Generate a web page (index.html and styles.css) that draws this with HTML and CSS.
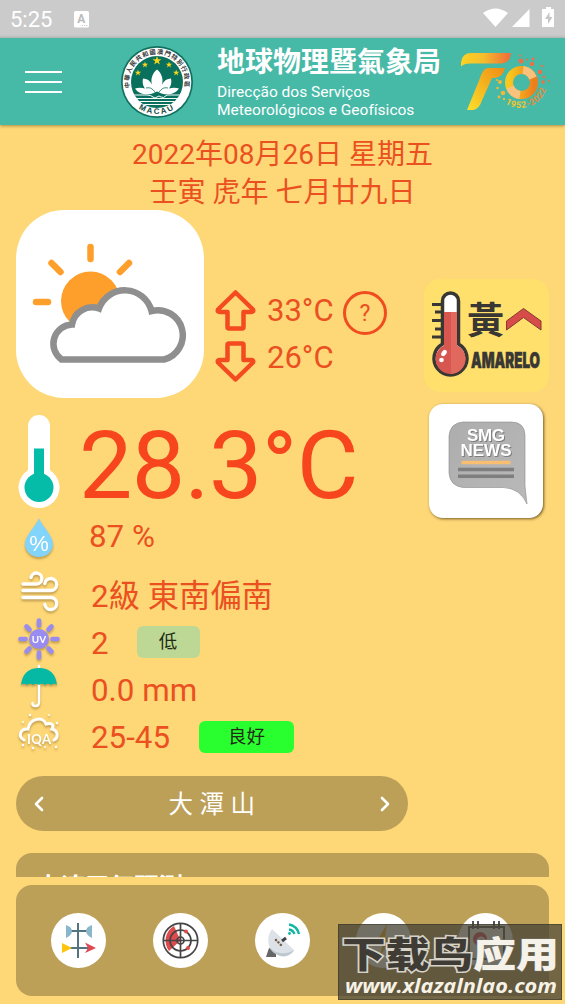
FILE: index.html
```html
<!DOCTYPE html>
<html lang="zh-Hant">
<head>
    <meta charset="UTF-8">
    <meta name="viewport" content="width=device-width, initial-scale=1.0">
    <title>地球物理暨氣象局</title>
    <link rel="stylesheet" href="styles.css">
</head>
<body>
    <div class="status-bar">
        <span class="time">5:25</span>
        <svg class="status-app" width="15" height="17" viewBox="0 0 15 17">
            <rect width="15" height="16.5" rx="1.5" fill="#fff"/>
            <text x="7.3" y="12" text-anchor="middle" font-family="Roboto" font-weight="700" font-size="12" fill="#bbb">A</text>
            <path d="M7.500 14.500h6" stroke="#ccc" stroke-dasharray="1.300 1"/>
        </svg>
        <svg class="status-icons" width="72" height="22" viewBox="0 0 72 22">
            <path d="M0 6Q12.500-3 25 6L12.500 20Z" fill="#fff"/>
            <path d="M29 20L46.500 2v18Z" fill="#fff"/>
            <path d="M60 2h3V0h5v2h3v18H59V2Z" fill="#fff"/>
            <path d="M66.500 5l-4.500 7h3v5l4.500-7h-3Z" fill="#c6c6c6"/>
        </svg>
    </div>

    <header class="app-bar">
        <div class="menu-button"><span></span><span></span><span></span></div>
        <svg class="emblem" width="72" height="72" viewBox="0 0 72 72">
            <defs>
                <path id="ringTop" d="M8.900 42A27.800 27.800 0 1 1 63.100 42"/>
                <path id="ringBottom" d="M7 50A32.300 32.300 0 0 0 65 50"/>
                <clipPath id="innerDisc"><circle cx="36" cy="36" r="26"/></clipPath>
            </defs>
            <circle cx="36" cy="36" r="36" fill="#12705f"/>
            <circle cx="36" cy="36" r="34.300" fill="#fff"/>
            <circle cx="36" cy="36" r="26" fill="#08705c"/>
            <text class="ring-text"><textPath href="#ringTop">中華人民共和國澳門特別行政區</textPath></text>
            <text class="ring-macau"><textPath href="#ringBottom" startOffset="50%" text-anchor="middle">MACAU</textPath></text>
            <g fill="#f6d51c">
                <path id="star" d="M36 10l1.100 3.200h3.400l-2.700 2 1 3.300-2.800-2-2.800 2 1-3.300-2.700-2h3.400Z"/>
                <use href="#star" transform="translate(-1.200 8.500) scale(.7)"/>
                <use href="#star" transform="translate(22.800 8.500) scale(.7)"/>
                <use href="#star" transform="translate(-8.200 16.500) scale(.7)"/>
                <use href="#star" transform="translate(30 16.500) scale(.7)"/>
            </g>
            <g fill="#fff">
                <path d="M36 23.500c5 4 6.500 10 5 15 2-4 5-6 9-6 1 5-.5 8-2 10 3-1 7-1 10 0-4 6-13 8-22 3-9 5-18 3-22-3 3-1 7-1 10 0-1.500-2-3-5-2-10 4 0 7 2 9 6-1.500-5 0-11 5-15Z"/>
            </g>
            <path d="M36 49C32 43 30 41 25 42M36 49c4-6 6-8 11-7" fill="none" stroke="#08705c" stroke-width=".8"/>
            <g clip-path="url(#innerDisc)" stroke="#fff" fill="none">
                <path d="M8 49h18q4 0 6 2t4 0 4 0 6-2h18" stroke-width="1"/>
                <path d="M8 52.500h56M8 55.500h56M8 58.500h56" stroke-width="1"/>
            </g>
        </svg>
        <div class="titles">
            <h1>地球物理暨氣象局</h1>
            <p>Direcção dos Serviços<br>Meteorológicos e Geofísicos</p>
        </div>
        <svg class="anniversary" width="90" height="58" viewBox="0 0 90 58">
            <defs>
                <linearGradient id="goldBar" x1="0" x2="1">
                    <stop offset="0" stop-color="#fad323"/><stop offset=".45" stop-color="#f5bd2c"/><stop offset="1" stop-color="#f06a3b"/>
                </linearGradient>
                <linearGradient id="goldStem" x1="1" y1="0" x2="0" y2="1">
                    <stop offset="0" stop-color="#ef8b16"/><stop offset="1" stop-color="#fae02a"/>
                </linearGradient>
                <linearGradient id="goldRing" x1="0" x2="1">
                    <stop offset="0" stop-color="#f9c91e"/><stop offset="1" stop-color="#ed7e1d"/>
                </linearGradient>
                <path id="yearArc" d="M44 50.500A27.500 27.500 0 0 0 86 33"/>
            </defs>
            <path d="M0 13.500V9.500Q1 0 10 0H50Q49 10.500 40 10.500H9Q3 10.500 0 13.500Z" fill="url(#goldBar)"/>
            <path d="M27 15H44L42 20Q40 24 34 25H31L19 52Q16 57 11 57H6L19 25Q22 15 27 15Z" fill="url(#goldStem)"/>
            <circle cx="60.500" cy="29.500" r="12.500" fill="none" stroke="url(#goldRing)" stroke-width="8"/>
            <path d="M62 17A12.500 12.500 0 0 1 72 25M59 42A12.500 12.500 0 0 1 49 34" fill="none" stroke="#f8c17c" stroke-width="8"/>
            <g fill="#ee7044">
                <circle cx="60" cy="8" r="2.500"/><circle cx="71" cy="11" r="2.200"/><circle cx="79" cy="19" r="2.200"/>
                <circle cx="72" cy="6" r="1.400"/><circle cx="66" cy="6.500" r="1"/><circle cx="81" cy="13" r="1.200"/>
                <circle cx="83" cy="24" r="1.300"/><circle cx="82" cy="29" r="1.700"/><circle cx="88" cy="28" r="1"/><circle cx="59" cy="2.500" r="1"/>
            </g>
            <g fill="#efb83a">
                <circle cx="39" cy="29" r="2"/><circle cx="36.500" cy="35" r="1.300"/><circle cx="42" cy="40" r="2.300"/><circle cx="38" cy="44" r="1.400"/><circle cx="43" cy="46" r="1.200"/><circle cx="36" cy="27" r="1"/>
            </g>
            <text class="years"><textPath href="#yearArc" textLength="50"><tspan fill="#f4c52b">1952</tspan><tspan fill="#eb8a35">-2022</tspan></textPath></text>
        </svg>
    </header>

    <main>
        <div class="date">
            <p>2022年08月26日 星期五</p>
            <p>壬寅 虎年 七月廿九日</p>
        </div>

        <div class="overview">
            <section class="readings">
                <div class="today">
                    <div class="weather-icon">
                        <svg width="188" height="188" viewBox="0 0 188 188">
                            <circle cx="74.500" cy="91" r="29.500" fill="#ff9f2b"/>
                            <path d="M74.500 37v12M35.500 53l9 9M113 53l-9 9M20 92h12" stroke="#ff9f2b" stroke-width="6.500" stroke-linecap="round"/>
                            <path d="M46.500 149.500A19.300 19.300 0 0 1 57 114.500A20.500 20.500 0 0 1 84 98.500A27.500 27.500 0 0 1 136.500 101A25 25 0 1 1 149 149.500Z" transform="translate(-1)" fill="#fff" stroke="#8f8f8f" stroke-width="6.500"/>
                        </svg>
                    </div>
                    <div class="range">
                        <div class="range-row">
                            <svg width="41" height="41" viewBox="0 0 41 41"><path d="M20.500 2.500L38 19.500Q39 22 36 22H28.500V37Q28.500 38.500 27 38.500H14Q12.500 38.500 12.500 37V22H5Q2 22 3 19.500Z"/></svg>
                            <span>33°C</span>
                            <div class="help">?</div>
                        </div>
                        <div class="range-row">
                            <svg class="down" width="41" height="41" viewBox="0 0 41 41"><path d="M20.500 2.500L38 19.500Q39 22 36 22H28.500V37Q28.500 38.500 27 38.500H14Q12.500 38.500 12.500 37V22H5Q2 22 3 19.500Z"/></svg>
                            <span>26°C</span>
                        </div>
                    </div>
                </div>

                <div class="reading current">
                    <svg width="46" height="98" viewBox="0 0 46 98">
                        <rect x="12" y="3" width="22" height="70" rx="11" fill="#fff"/>
                        <circle cx="23" cy="75.500" r="20.500" fill="#fff"/>
                        <circle cx="23" cy="75.500" r="14.500" fill="#05bca9"/>
                        <path d="M18 36.500h10v32H18Z" fill="#05bca9"/>
                    </svg>
                    <span>28.3°C</span>
                </div>
                <div class="reading humidity">
                    <svg width="46" height="46" viewBox="0 0 46 46">
                        <path d="M23 1C21 8 9 18 9 27a14 13 0 0 0 28 0C37 18 25 8 23 1Z" fill="#83d4fa"/>
                        <text x="23" y="33.500" text-anchor="middle" font-family="Liberation Sans" font-size="22" fill="#fff">%</text>
                    </svg>
                    <span>87 %</span>
                </div>
                <div class="reading wind">
                    <svg width="46" height="46" viewBox="0 0 46 46" fill="none" stroke="#fff" stroke-width="3.400" stroke-linecap="round">
                        <path d="M7 14H20A5.500 5.500 0 1 0 15 7.500M7 20.500H34.500A6 6 0 1 0 28.800 13.500M7 27.500H34.500A6 6 0 1 1 28.800 34.500"/>
                    </svg>
                    <span>2級 東南偏南</span>
                </div>
                <div class="reading">
                    <svg width="46" height="46" viewBox="0 0 46 46">
                        <circle cx="23" cy="22" r="10" fill="#988cf0"/>
                        <path d="M23 3.500v5M23 35.500v5M4.500 22h5M36.500 22h5M10.500 9.500l3 3M32.500 31.500l3 3M10.500 34.500l3-3M32.500 12.500l3-3" stroke="#988cf0" stroke-width="4.600" stroke-linecap="round"/>
                        <text x="23" y="25.500" text-anchor="middle" font-family="Lato" font-weight="700" font-size="10" fill="#fff">UV</text>
                    </svg>
                    <span>2</span>
                    <em class="level low">低</em>
                </div>
                <div class="reading">
                    <svg width="46" height="46" viewBox="0 0 46 46">
                        <path d="M23 2V38Q23 42 19.500 42T16.500 39" fill="none" stroke="#fff" stroke-width="2.500" stroke-linecap="round"/>
                        <path d="M5 21Q7 4 23 4T41 21q-3-2.500-6 0-3-2.500-6 0-3-2.500-6 0-3-2.500-6 0-3-2.500-6 0-3-2.500-6 0Z" fill="#05b9a5"/>
                    </svg>
                    <span>0.0 mm</span>
                </div>
                <div class="reading">
                    <svg width="46" height="46" viewBox="0 0 46 46">
                        <path d="M8 29C1 25 5 17 12 18C14 7 27 5 30 13C37 11 38 15 36 18C43 20 42 27 38 29" fill="none" stroke="#fff" stroke-width="3" stroke-linecap="round"/>
                        <text x="23" y="32.500" text-anchor="middle" font-family="Lato" font-weight="700" font-size="13" fill="#fff" textLength="24">IQA</text>
                        <g fill="#fff"><circle cx="14" cy="4" r="1.300"/><circle cx="7" cy="11" r="1"/><circle cx="33" cy="4" r="1"/><circle cx="41" cy="12" r="1.200"/><circle cx="7" cy="34" r="1.200"/><circle cx="17" cy="37" r="1.200"/><circle cx="29" cy="36" r="1"/><circle cx="40" cy="36" r="1.200"/></g>
                    </svg>
                    <span>25-45</span>
                    <em class="level good">良好</em>
                </div>
            </section>

            <aside class="cards">
                <div class="card warning">
                    <svg width="125" height="113" viewBox="0 0 125 113">
                        <path d="M18.500 65V22a8 8 0 0 1 16 0V65a16.500 16.500 0 1 1-16 0Z" fill="#fff" stroke="#393733" stroke-width="3.500"/>
                        <path d="M20 33H33V66.500a15 15 0 1 1-13 0Z" fill="#d85650"/>
                        <path d="M27 33h6v33.500a15 15 0 0 1-6 28.500Z" fill="#e0685c"/>
                        <path d="M8 25.500h9M11 33h6M8 41.500h9M11 50h6M8 58h9" stroke="#393733" stroke-width="3"/>
                        <ellipse cx="20" cy="74" rx="2.300" ry="3.500" transform="rotate(35 20 74)" fill="#fff"/><circle cx="17.500" cy="81" r="2.300" fill="#fff"/>
                        <text x="43" y="55" class="yellow-sign">黃</text>
                        <path d="M82.500 42L99.500 29.500 117 42V51L99.500 38.500 82.500 51Z" fill="#d74b48" stroke="#813d31"/>
                        <text x="47" y="88.500" class="amarelo" textLength="69" lengthAdjust="spacingAndGlyphs">AMARELO</text>
                    </svg>
                </div>
                <div class="card news">
                    <svg width="114" height="114" viewBox="0 0 114 114">
                        <defs>
                            <linearGradient id="bubble" x1="0" x2="1" y2="1"><stop offset="0" stop-color="#adadad"/><stop offset="1" stop-color="#b9b9b9"/></linearGradient>
                        </defs>
                        <path d="M34 18H82Q95.500 18 96 31V82Q97 91 98 100Q91 84 74 83.500H34Q21 82 20 69V32Q21 19 34 18Z" fill="url(#bubble)" stroke="#8c8c8c" stroke-width=".6"/>
                        <g class="news-text"><text x="57" y="36.500" textLength="38">SMG</text><text x="57" y="51.500" textLength="51" lengthAdjust="spacingAndGlyphs">NEWS</text></g>
                        <path d="M32.500 58.500H81.500" stroke="#f8bf70" stroke-width="3.500"/>
                        <path d="M29 65.500H85M29 72.200H85" stroke="#7e7e7e" stroke-width="3.500"/>
                    </svg>
                </div>
            </aside>
        </div>

        <div class="station">
            <svg width="10" height="16" viewBox="0 0 10 16"><path d="M8 2L2 8l6 6"/></svg>
            <span>大潭山</span>
            <svg width="10" height="16" viewBox="0 0 10 16"><path d="M2 2l6 6-6 6"/></svg>
        </div>

        <section class="forecast">
            <h2>本澳天氣預測</h2>
        </section>
    </main>

    <nav class="bottom-nav">
        <svg viewBox="0 0 55 55">
            <circle cx="27.500" cy="27.500" r="27.500" fill="#fff"/>
            <path d="M27 10v35M17 18h22M19 35h19" stroke="#54747f" stroke-width="2" fill="none"/>
            <path d="M15 12q6 2 6 6t-6 7ZM41 12q-6 2-6 6t6 7Z" fill="#8ab6cb"/>
            <path d="M11 30l10 5-10 5Z" fill="#fdc50d"/><path d="M34 29.500L45 35l-11 5 3-5Z" fill="#de4850"/>
        </svg>
        <svg viewBox="0 0 55 55">
            <circle cx="27.500" cy="27.500" r="27.500" fill="#fff"/>
            <path d="M27.500 27.500L16 38A17 17 0 0 1 21 13Z" fill="#e14a4c"/>
            <g fill="none" stroke="#454545" stroke-width="1.700"><circle cx="27.500" cy="27.500" r="17.200"/><circle cx="27.500" cy="27.500" r="10.500"/><circle cx="27.500" cy="27.500" r="3.500"/><path d="M27.500 10v35M10 27.500h35"/></g>
            <circle cx="33" cy="18.500" r="2" fill="#e14a4c"/><circle cx="35" cy="35" r="2" fill="#e14a4c"/>
        </svg>
        <svg viewBox="0 0 55 55">
            <circle cx="27.500" cy="27.500" r="27.500" fill="#fff"/>
            <path d="M14 35l7 3v6H11Z" fill="#666"/>
            <path d="M17 16C11 24 12 36 21 41S35 43 39 37Z" fill="#dce2e7"/>
            <path d="M13 30C14 39 29 44 39 37C35 44 26 45 19 40Q14 36 13 30Z" fill="#bcc7cf"/>
            <path d="M27 28l4-3" stroke="#444" stroke-width="3"/>
            <path d="M21 27l7 7" stroke="#765d45" stroke-width="2.500" stroke-linecap="round" stroke-dasharray=".1 3.300"/>
            <path d="M34 11.500Q42 13 44 21M34 16.500Q38 17 39.500 21" stroke="#10b5a5" stroke-width="2.300" fill="none"/><circle cx="34.500" cy="20.500" r="1.400" fill="#10b5a5"/>
        </svg>
        <svg viewBox="0 0 55 55">
            <circle cx="27.500" cy="27.500" r="27.500" fill="#fff"/>
            <path d="M31 11L19 31h8l-4 14 14-21h-8Z" fill="#f6b62c"/>
        </svg>
        <svg viewBox="0 0 55 55">
            <circle cx="27.500" cy="27.500" r="27.500" fill="#fff"/>
            <path d="M11 14H46V46H11ZM15 8v8M20 8v8M36 8v8M41 8v8" fill="none" stroke="#555" stroke-width="2"/>
            <circle cx="22" cy="26" r="7" fill="#dc5266"/><path d="M19 28q4-7 8 0" stroke="#fff" fill="none" stroke-width="2"/>
        </svg>
    </nav>

    <div class="site-badge">
        <svg width="224" height="76" viewBox="0 0 224 76">
            <text x="3" y="43" class="badge-name dark" textLength="131" lengthAdjust="spacingAndGlyphs">下载鸟</text>
            <text x="134" y="43" class="badge-name light" textLength="86" lengthAdjust="spacingAndGlyphs">应用</text>
            <text x="6" y="68" class="badge-url" textLength="212" lengthAdjust="spacingAndGlyphs">www.xlazalnlao.com</text>
        </svg>
    </div>
</body>
</html>
```

FILE: styles.css
```css
/* Global Styles */
* {
    margin: 0;
    padding: 0;
    box-sizing: border-box;
}

body {
    position: relative;
    width: 565px;
    height: 1004px;
    overflow: hidden;
    display: flex;
    flex-direction: column;
    background: #fed777;
    color: #ea5020;
    font-family: Roboto, "Noto Sans CJK TC", sans-serif;
}

svg {
    display: block;
    flex: none;
    overflow: visible;
}

/* Status Bar */
.status-bar {
    height: 38px;
    flex: none;
    display: flex;
    align-items: center;
    padding: 0 10px;
    background: linear-gradient(#cbcbcb 90%, #bdc1c0);
    color: #fff;
}

.time {
    width: 64px;
    font-size: 22px;
}

.status-icons {
    margin: -2px 0 0 auto;
}

/* App Bar */
.app-bar {
    height: 87px;
    flex: none;
    display: flex;
    align-items: center;
    padding-left: 25px;
    background: #47b9a7;
    color: #fff;
    box-shadow: 0 1px 3px rgba(80, 70, 20, 0.5);
}

.menu-button {
    width: 37px;
    display: flex;
    flex-direction: column;
    gap: 8px;
}

.menu-button span {
    height: 2px;
    background: #fff;
}

.emblem {
    margin-left: 59px;
}

.ring-text {
    font: 700 6.2px "Noto Sans CJK TC", sans-serif;
    letter-spacing: 0.9px;
    fill: #333;
}

.ring-macau {
    font: 700 8px "Liberation Sans", sans-serif;
    letter-spacing: 1.8px;
    fill: #174c43;
}

.titles {
    width: 244px;
    margin-left: 24px;
}

.titles h1 {
    font-size: 28px;
    font-weight: 700;
    line-height: 38px;
    white-space: nowrap;
}

.titles p {
    font-size: 15.5px;
    line-height: 18px;
    margin-top: 1px;
    white-space: nowrap;
}

.years {
    font: 700 9px Roboto, sans-serif;
}

/* Date */
main {
    height: 752px;
    flex: none;
    overflow: hidden;
    padding: 10px 16px 0;
}

.date {
    height: 75px;
    padding-top: 1px;
    text-align: center;
    font-size: 28px;
    line-height: 38px;
}

/* Readings */
.overview {
    display: flex;
    justify-content: space-between;
    height: 551px;
}

.today {
    height: 188px;
    display: flex;
}

.weather-icon {
    width: 188px;
    height: 188px;
    border-radius: 48px;
    background: #fff;
}

.range {
    padding: 77px 0 0 11px;
    font-size: 31px;
}

.range-row {
    height: 47px;
    display: flex;
    align-items: center;
}

.range-row span {
    width: 78px;
    flex: none;
    padding-left: 11px;
}

.range-row path {
    fill: none;
    stroke: #f44a20;
    stroke-width: 4.5;
    stroke-linejoin: round;
}

.range-row .down {
    transform: scaleY(-1) translateY(-4px);
}

.help {
    width: 44px;
    height: 44px;
    flex: none;
    margin: 5px 0 0 9px;
    border: 3px solid #f04c20;
    border-radius: 50%;
    display: flex;
    align-items: center;
    justify-content: center;
    font-size: 23px;
}

.reading {
    height: 47px;
    display: flex;
    align-items: center;
    font-size: 31.3px;
    white-space: nowrap;
}

.reading svg {
    margin-top: -7px;
    filter: drop-shadow(0 2px 1px rgba(120, 90, 30, 0.45));
}

.reading span {
    margin-left: 29px;
}

.reading.current {
    height: 117px;
    color: #f7461e;
    font-size: 95px;
}

.current svg {
    margin-top: 8px;
    filter: none;
}

.current span {
    margin: 17px 0 0 17px;
    letter-spacing: -0.6px;
}

.humidity svg {
    margin-top: 3px;
}

.humidity span {
    margin: -4px 0 0 27px;
}

.reading.wind {
    margin-top: 11px;
}

.wind span {
    margin-top: -7px;
}

.level {
    height: 32px;
    border-radius: 6px;
    color: #222b15;
    font-size: 18.5px;
    font-style: normal;
    line-height: 32px;
    text-align: center;
    margin-top: -4px;
}

.low {
    width: 63px;
    margin-left: 28px;
    background: #bdd894;
}

.good {
    width: 95px;
    margin: -2px 0 0 29px;
    background: #29ff2f;
}

/* Side Cards */
.cards {
    width: 125px;
    padding-top: 69px;
    display: flex;
    flex-direction: column;
    gap: 12px;
}

.warning {
    height: 113px;
    border-radius: 16px;
    background: #ffe06c;
}

.news {
    width: 114px;
    height: 114px;
    margin-left: 5px;
    border-radius: 14px;
    background: #fff;
    box-shadow: 1px 1px 3px rgba(70, 50, 10, 0.75);
}

.yellow-sign {
    font: 700 37px "Noto Sans CJK TC", sans-serif;
    fill: #393733;
}

.amarelo {
    font: 900 22px Inter, sans-serif;
    fill: #393733;
    stroke: #393733;
    stroke-width: 0.6px;
}

.news-text {
    font: 700 17px "Liberation Sans", sans-serif;
    fill: #fff;
    text-anchor: middle;
    filter: drop-shadow(1px 1px 0 #7d7d7d);
}

/* Station Picker */
.station {
    width: 392px;
    height: 55px;
    padding: 0 18px;
    border-radius: 28px;
    display: flex;
    align-items: center;
    justify-content: space-between;
    background: #bda058;
    color: #fff;
    margin-top: 15px;
}

.station span {
    font-size: 24.5px;
    font-weight: 400;
    letter-spacing: 6.5px;
    margin: -3px -6px 0 0;
}

.station path {
    fill: none;
    stroke: #fff;
    stroke-width: 2.6;
    stroke-linecap: round;
    stroke-linejoin: round;
}

/* Forecast */
.forecast {
    height: 100px;
    margin-top: 22px;
    padding: 17px 20px;
    border-radius: 16px;
    background: #bda058;
    color: #fff;
}

.forecast h2 {
    font-size: 24.5px;
    font-weight: 700;
    line-height: 36px;
}

/* Bottom Navigation */
.bottom-nav {
    height: 111px;
    flex: none;
    margin: 8px 16px 0;
    padding: 0 36px 0 35px;
    border-radius: 16px;
    display: flex;
    align-items: center;
    justify-content: space-between;
    background: #bda058;
}

.bottom-nav svg {
    width: 55px;
    height: 55px;
}

/* Site Badge */
.site-badge {
    position: absolute;
    left: 338px;
    top: 924px;
    width: 224px;
    height: 76px;
    background: rgba(70, 66, 53, 0.76);
    border: 1px solid rgba(50, 48, 38, 0.5);
}

.badge-name {
    font: 900 36px "Noto Sans CJK SC", sans-serif;
    paint-order: stroke;
    stroke-width: 3px;
}

.dark {
    fill: #3f3c35;
    stroke: #d6d2c8;
}

.light {
    fill: #f5f2ea;
    stroke: #77746b;
    stroke-width: 1px;
}

.badge-url {
    font: italic 700 20px "Open Sans", sans-serif;
    fill: #f6f2e6;
}
```
